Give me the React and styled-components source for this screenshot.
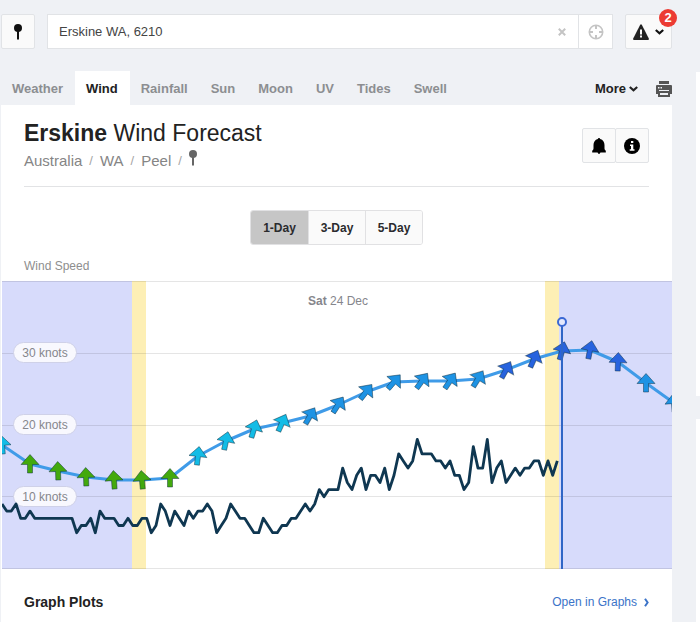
import React from 'react'
import styled, { createGlobalStyle } from 'styled-components'

const GlobalStyle = createGlobalStyle`
  * {
    box-sizing: border-box;
  }

  body {
    margin: 0;
    background: #eff1f5;
    color: #222;
    font-family: "Liberation Sans", Arial, sans-serif;
    font-size: 13px;
  }

  button,
  input {
    font: inherit;
    color: inherit;
    margin: 0;
  }

  a {
    text-decoration: none;
  }

  svg {
    display: block;
    flex: none;
  }
`

const Page = styled.div`
  display: flex;
  gap: 24px;
  min-height: 100vh;
  overflow: hidden;
`

const Main = styled.main`
  display: flex;
  flex-direction: column;
  flex: 1;
  min-width: 0;
  padding-left: 1px;
`

const Sidebar = styled.aside`
  display: flex;
  flex-direction: column;
  gap: 23px;
  flex: 0 0 4px;
  padding-top: 72px;
`

const SideCard = styled.div`
  flex: ${props => (props.$fill ? '1' : '0 0 324px')};
  background: #fff;
`

const TopBar = styled.header`
  display: flex;
  gap: 12px;
  padding-top: 14px;
`

const IconButton = styled.button`
  position: relative;
  display: flex;
  align-items: center;
  justify-content: center;
  gap: 6px;
  width: ${props => (props.$wide ? '47px' : '34px')};
  height: 35px;
  padding: 0;
  border: 1px solid #e1e3e6;
  border-radius: 2px;
  background: #fafafa;
  color: #111;
`

const Badge = styled.span`
  position: absolute;
  top: -6px;
  right: -6px;
  width: 18px;
  height: 18px;
  border-radius: 50%;
  background: #ec3b33;
  color: #fff;
  font-size: 13px;
  font-weight: bold;
  line-height: 18px;
  text-align: center;
`

const SearchBox = styled.form`
  display: flex;
  flex: 1;
  height: 35px;
  border: 1px solid #e1e3e6;
  background: #fff;
`

const SearchInput = styled.input`
  flex: 1;
  min-width: 0;
  padding: 0 11px;
  border: 0;
  outline: 0;
  background: none;
  color: #444;
`

const SearchButton = styled.button`
  display: flex;
  align-items: center;
  justify-content: center;
  width: 34px;
  padding: 0;
  border: 0;
  border-left: 1px solid ${props => (props.$divided ? '#e1e3e6' : 'transparent')};
  background: none;
  color: #c4c4c4;
`

const TabBar = styled.nav`
  display: flex;
  align-items: center;
  height: 33px;
  margin-top: 23px;
`

const Tab = styled.a`
  padding: 0 12px 0 11px;
  background: ${props => (props.$active ? '#fff' : 'none')};
  color: ${props => (props.$active ? '#222' : '#8c8e91')};
  font-weight: bold;
  line-height: 35px;
`

const TabTools = styled.div`
  display: flex;
  align-items: center;
  gap: 18px;
  margin-left: auto;
`

const ToolButton = styled.button`
  display: flex;
  align-items: center;
  gap: 3px;
  padding: 0;
  border: 0;
  background: none;
  color: ${props => (props.$muted ? '#555' : '#222')};
  font-weight: bold;
`

const Panel = styled.section`
  display: flex;
  flex-direction: column;
  flex: 1;
  background: #fff;
`

const PanelHeader = styled.div`
  display: flex;
  justify-content: space-between;
  margin: 0 23px;
  padding: 15px 0 16px;
  border-bottom: 1px solid #e2e3e5;
`

const Title = styled.h1`
  margin: 0;
  font-size: 23px;
  font-weight: normal;
  line-height: 26px;
`

const Breadcrumb = styled.div`
  display: flex;
  align-items: center;
  gap: 7px;
  height: 20px;
  margin-top: 4px;
  color: #a5a5a5;
  font-size: 13px;

  a {
    color: #858585;
    font-size: 15px;
  }

  svg {
    align-self: flex-start;
    color: #666;
  }
`

const HeaderActions = styled.div`
  display: flex;
  margin-top: 8px;
  height: 35px;

  button + button {
    margin-left: -1px;
  }
`

const DaySwitch = styled.div`
  display: flex;
  align-self: center;
  height: 35px;
  margin-top: 23px;
  border: 1px solid #e1e1e3;
  border-radius: 3px;
  overflow: hidden;
`

const DayButton = styled.button`
  width: 57px;
  padding: 0;
  border: 0;
  border-left: ${props => (props.$active ? '0' : '1px solid #e1e1e3')};
  background: ${props => (props.$active ? '#c6c6c6' : '#fafafa')};
  color: #2b2b2e;
  font-size: 12px;
  font-weight: bold;
`

const ChartTitle = styled.h2`
  margin: 13px 23px 7px;
  color: #8e8e8e;
  font-size: 12px;
  font-weight: normal;
  line-height: 16px;
`

const Chart = styled.svg`
  width: 100%;
  height: auto;
  padding-left: 1px;

  text {
    font-size: 12px;
    fill: #85868c;
  }
`

const PanelFooter = styled.div`
  display: flex;
  align-items: center;
  justify-content: space-between;
  margin: 22px 23px 0;
`

const FooterTitle = styled.h2`
  margin: 0;
  font-size: 14px;
  line-height: 20px;
`

const GraphLink = styled.a`
  display: flex;
  align-items: center;
  gap: 7px;
  color: #3b73c8;
  font-size: 12px;
  line-height: 22px;
`

const PinIcon = () => (
  <svg width="8" height="16" viewBox="0 0 8 16" fill="currentColor">
    <circle cx="4" cy="4" r="4" />
    <path d="M3 7h2v8l-1 1l-1-1z" />
  </svg>
)

const ChevronIcon = () => (
  <svg width="9" height="6" viewBox="0 0 9 6" fill="none" stroke="currentColor" strokeWidth="2.2">
    <path d="M.8 1L4.5 4.300L8.200 1" />
  </svg>
)

const CloseIcon = () => (
  <svg width="8" height="8" viewBox="0 0 8 8" stroke="currentColor" strokeWidth="2">
    <path d="M.8.8l6.4 6.4M7.2.8L.8 7.2" />
  </svg>
)

const LocateIcon = () => (
  <svg width="16" height="16" viewBox="0 0 16 16" fill="none" stroke="currentColor">
    <circle cx="8" cy="8" r="6.7" strokeWidth="1.600" />
    <path d="M8 1v4M8 11v4M1 8h4M11 8h4" strokeWidth="2" />
  </svg>
)

const WarningIcon = () => (
  <svg width="16" height="16" viewBox="0 0 16 16">
    <path d="M7.200.8Q8-.4 8.800.8L15.800 14.600Q16.200 16 15 16H1Q-.2 16 .2 14.600z" fill="#222" />
    <path d="M7 5.500h2v5H7zM7 11.500h2v2H7z" fill="#fafafa" />
  </svg>
)

const PrinterIcon = () => (
  <svg width="16" height="16" viewBox="0 0 16 16">
    <path d="M3 0h10v3H3zM1 4h14q1 0 1 1v8h-2v3H2v-3H0V5q0-1 1-1z" fill="currentColor" />
    <path d="M2 6h1.500v1.500H2zM4.500 6H6v1.500H4.500zM3 9h10v1H3zM4 12h8v2H4z" fill="#eff1f5" />
  </svg>
)

const BellIcon = () => (
  <svg width="14" height="16" viewBox="0 0 14 16" fill="#000">
    <path d="M7 0q1 0 1.200 1C11 1.700 12.500 4 12.500 7v3.500q0 1.500 1.300 2.300V14.500H.200v-1.700Q1.500 12 1.500 10.500V7c0-3 1.500-5.300 4.300-6Q6 0 7 0z" />
    <path d="M5.500 14h3q-.5 2-1.500 2t-1.500-2z" />
  </svg>
)

const InfoIcon = () => (
  <svg width="16" height="16" viewBox="0 0 16 16">
    <circle cx="8" cy="8" r="8" fill="#000" />
    <path d="M7 3h2.300v2H7zM6 6.500h3.300v4.700H10.500v1.500H5.700v-1.500H7V8H6z" fill="#fff" />
  </svg>
)

const NextIcon = () => (
  <svg width="5" height="9" viewBox="0 0 5 9" fill="none" stroke="currentColor" strokeWidth="2">
    <path d="M1 .8L3.600 4.500L1 8.200" />
  </svg>
)

const TABS = ['Weather', 'Wind', 'Rainfall', 'Sun', 'Moon', 'UV', 'Tides', 'Swell']
const DAYS = ['1-Day', '3-Day', '5-Day']

const GREEN = '#43a90d'
const CYAN = '#13bce6'
const SKY = '#1e93e4'
const BLUE = '#2763de'

// y on the chart, wind direction in degrees, colour; one per hour
const FORECAST = [
  [164, -5, CYAN], [183, 0, GREEN], [190, -2, GREEN], [196, -2, GREEN], [199, -4, GREEN],
  [199, -5, GREEN], [197, 0, GREEN], [175, 7, CYAN], [160, 12, CYAN], [148, 17, CYAN],
  [142, 24, CYAN], [135, 30, SKY], [124, 33, SKY], [111, 38, SKY], [101, 41, SKY],
  [100, 36, SKY], [100, 34, SKY], [98, 32, SKY], [89, 29, BLUE], [78, 24, BLUE],
  [70, 15, BLUE], [69, 11, BLUE], [81, 2, BLUE], [102, 0, SKY], [122, -4, SKY],
]

// observed speed in knots, every ten minutes
const OBSERVED = [
  9, 8, 8, 9, 7, 7, 8, 7, 7, 7, 7, 7, 7, 7, 7, 7, 5, 6, 6, 7, 5, 8, 7, 7, 7, 6, 6, 7, 6, 6,
  7, 7, 5, 6, 9, 8, 6, 8, 7, 6, 8, 7, 8, 8, 9, 8, 5, 6, 7, 9, 8, 7, 7, 6, 5, 5, 7, 6, 5, 5,
  6, 6, 7, 7, 8, 9, 8, 9, 11, 10, 11, 11, 11, 14, 12, 11, 13, 14, 11, 13, 13, 12, 14, 11, 13,
  16, 15, 14, 15, 18, 16, 16, 16, 15, 15, 14, 15, 13, 13, 11, 12, 17, 14, 14, 18, 12, 14, 15,
  12, 13, 14, 13, 14, 14, 15, 15, 13, 15, 13, 15,
]

const HOUR = 28
const knotsY = knots => 287.5 - knots * 7.17

const forecastPoints = FORECAST.map(([y], i) => `${i * HOUR},${y}`).join(' ')
const observedPoints = OBSERVED.map((v, i) => `${((i * HOUR) / 6).toFixed(1)},${knotsY(v).toFixed(1)}`).join(' ')

const WindChart = () => (
  <Chart viewBox="0 0 670 288" role="img" aria-label="Wind speed">
    <g fill="#d7dbfb">
      <rect width="130" height="288" />
      <rect x="557" width="113" height="288" />
    </g>
    <g fill="#fdefb5">
      <rect x="130" width="14" height="288" />
      <rect x="543" width="14" height="288" />
    </g>
    {[0, 10, 20, 30, 40].map(v => (
      <path key={v} d={`M0 ${Math.floor(knotsY(v)) + 0.5}H670`} stroke="#000" strokeOpacity=".1" />
    ))}
    {[10, 20, 30].map(v => (
      <g key={v}>
        <rect x="11.500" y={Math.round(knotsY(v)) - 10.5} width="63" height="20" rx="10" fill="#f8f8fe" stroke="#cfd1e8" />
        <text x="43" y={Math.round(knotsY(v)) + 4} textAnchor="middle">{v} knots</text>
      </g>
    ))}
    <text x="336" y="24" textAnchor="middle">
      <tspan fontWeight="bold">Sat</tspan> 24 Dec
    </text>
    <polyline points={observedPoints} fill="none" stroke="#0f3751" strokeWidth="2.8" strokeLinejoin="round" />
    <polyline points={forecastPoints} fill="none" stroke="#3f9be8" strokeWidth="3" strokeLinejoin="round" />
    {FORECAST.map(([y, angle, color], i) => (
      <path
        key={i}
        d="M0-9.500L9 .500H2.500V9H-2.500V.500H-9z"
        transform={`translate(${i * HOUR} ${y}) rotate(${angle})`}
        fill={color}
        stroke="#0b2b3c"
        strokeOpacity=".5"
        strokeWidth=".9"
      />
    ))}
    <path d="M560 45V288" stroke="#2f66c6" strokeWidth="2" />
    <circle cx="560" cy="41" r="4" fill="#e4e8fd" stroke="#3a68d4" strokeWidth="2" />
  </Chart>
)

const App = () => {
  return (
    <>
      <GlobalStyle />
      <Page>
        <Main>
          <TopBar>
            <IconButton aria-label="Saved locations">
              <PinIcon />
            </IconButton>
            <SearchBox>
              <SearchInput type="text" aria-label="Location" defaultValue="Erskine WA, 6210" />
              <SearchButton type="button" aria-label="Clear">
                <CloseIcon />
              </SearchButton>
              <SearchButton type="button" aria-label="Use my location" $divided>
                <LocateIcon />
              </SearchButton>
            </SearchBox>
            <IconButton aria-label="Warnings" $wide>
              <WarningIcon />
              <ChevronIcon />
              <Badge>2</Badge>
            </IconButton>
          </TopBar>
          <TabBar>
            {TABS.map(name => (
              <Tab key={name} href="#" $active={name === 'Wind'}>{name}</Tab>
            ))}
            <TabTools>
              <ToolButton>More <ChevronIcon /></ToolButton>
              <ToolButton aria-label="Print" $muted><PrinterIcon /></ToolButton>
            </TabTools>
          </TabBar>
          <Panel>
            <PanelHeader>
              <div>
                <Title><strong>Erskine</strong> Wind Forecast</Title>
                <Breadcrumb>
                  <a href="#">Australia</a>
                  <span>/</span>
                  <a href="#">WA</a>
                  <span>/</span>
                  <a href="#">Peel</a>
                  <span>/</span>
                  <PinIcon />
                </Breadcrumb>
              </div>
              <HeaderActions>
                <IconButton aria-label="Alerts"><BellIcon /></IconButton>
                <IconButton aria-label="Information"><InfoIcon /></IconButton>
              </HeaderActions>
            </PanelHeader>
            <DaySwitch>
              {DAYS.map((day, i) => (
                <DayButton key={day} $active={i === 0}>{day}</DayButton>
              ))}
            </DaySwitch>
            <ChartTitle>Wind Speed</ChartTitle>
            <WindChart />
            <PanelFooter>
              <FooterTitle>Graph Plots</FooterTitle>
              <GraphLink href="#">Open in Graphs <NextIcon /></GraphLink>
            </PanelFooter>
          </Panel>
        </Main>
        <Sidebar>
          <SideCard />
          <SideCard $fill />
        </Sidebar>
      </Page>
    </>
  )
}

export default App
